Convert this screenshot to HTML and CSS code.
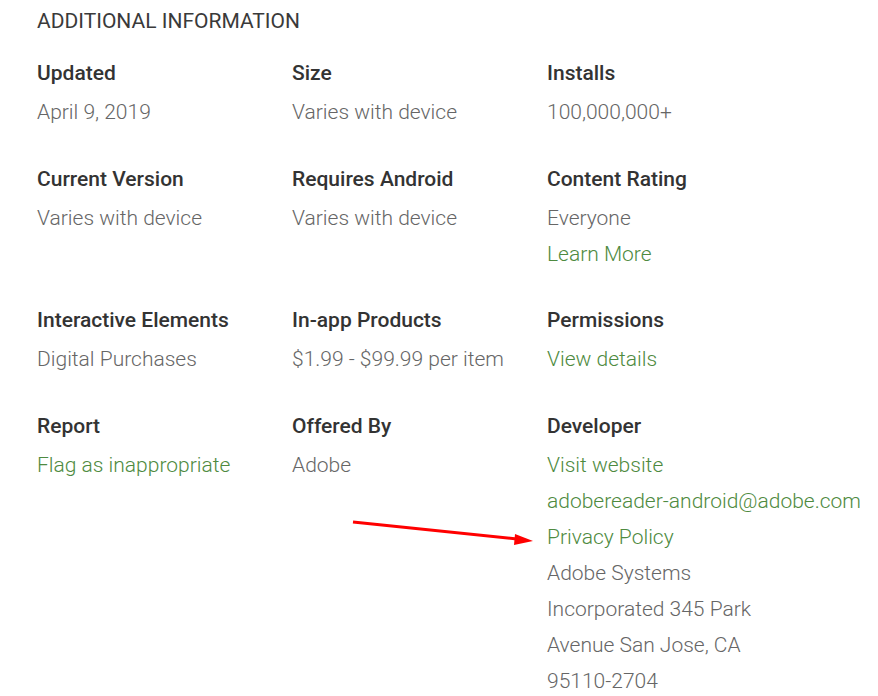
FILE: index.html
```html
<!DOCTYPE html>
<html lang="en">
<head>
<meta charset="utf-8">
<title>Additional Information</title>
<link rel="stylesheet" href="styles.css">
</head>
<body>
<section class="info">
  <h2 class="title">ADDITIONAL INFORMATION</h2>
  <div class="grid">
    <div class="cell">
      <div class="label">Updated</div>
      <div class="value">April 9, 2019</div>
    </div>
    <div class="cell">
      <div class="label">Size</div>
      <div class="value">Varies with device</div>
    </div>
    <div class="cell">
      <div class="label">Installs</div>
      <div class="value">100,000,000+</div>
    </div>

    <div class="cell">
      <div class="label">Current Version</div>
      <div class="value">Varies with device</div>
    </div>
    <div class="cell">
      <div class="label">Requires Android</div>
      <div class="value">Varies with device</div>
    </div>
    <div class="cell">
      <div class="label">Content Rating</div>
      <div class="value">Everyone</div>
      <div class="value"><a class="link" href="#">Learn More</a></div>
    </div>

    <div class="cell">
      <div class="label">Interactive Elements</div>
      <div class="value">Digital Purchases</div>
    </div>
    <div class="cell">
      <div class="label">In-app Products</div>
      <div class="value">$1.99 - $99.99 per item</div>
    </div>
    <div class="cell">
      <div class="label">Permissions</div>
      <div class="value"><a class="link" href="#">View details</a></div>
    </div>

    <div class="cell">
      <div class="label">Report</div>
      <div class="value"><a class="link" href="#">Flag as inappropriate</a></div>
    </div>
    <div class="cell">
      <div class="label">Offered By</div>
      <div class="value">Adobe</div>
    </div>
    <div class="cell">
      <div class="label">Developer</div>
      <div class="value"><a class="link" href="#">Visit website</a></div>
      <div class="value"><a class="link" href="#">adobereader-android@adobe.com</a></div>
      <div class="value"><a class="link" href="#">Privacy Policy</a></div>
      <div class="value">Adobe Systems<br>Incorporated 345 Park<br>Avenue San Jose, CA<br>95110-2704</div>
    </div>
  </div>
  <svg class="arrow" width="200" height="40" viewBox="0 0 200 40" aria-hidden="true">
    <line x1="8" y1="12" x2="172" y2="29" stroke="#ff0000" stroke-width="3" stroke-linecap="butt"/>
    <polygon points="188,31 170,24 169,35" fill="#ff0000"/>
  </svg>
</section>
</body>
</html>
```
FILE: styles.css
```css
html, body {
  margin: 0;
  padding: 0;
  background: #ffffff;
}

body {
  font-family: Roboto, "Noto Sans", Arial, sans-serif;
  color: #333333;
}

.info {
  position: relative;
  padding: 9px 0 0 37px;
}

.title {
  margin: 0 0 28px 0;
  font-size: 21px;
  line-height: 24px;
  font-weight: 400;
  color: #3a3a3a;
}

.grid {
  display: grid;
  grid-template-columns: 255px 255px 255px;
  row-gap: 36.5px;
}

.label {
  font-size: 21px;
  line-height: 24px;
  font-weight: 500;
  color: #333333;
  margin-bottom: 9px;
  white-space: nowrap;
}

.value {
  font-size: 21px;
  line-height: 36px;
  font-weight: 300;
  color: #666666;
  white-space: nowrap;
}

.link {
  color: #4e8a40;
  text-decoration: none;
}

.arrow {
  position: absolute;
  left: 345px;
  top: 510px;
}
```
